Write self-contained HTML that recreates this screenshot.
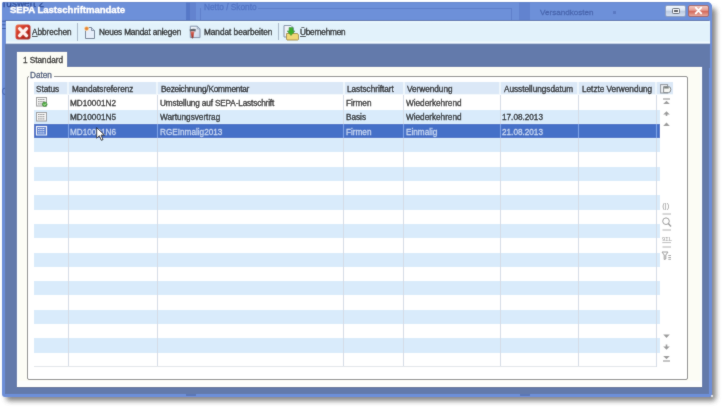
<!DOCTYPE html>
<html><head><meta charset="utf-8">
<style>
*{margin:0;padding:0;box-sizing:border-box}
html,body{width:723px;height:408px;overflow:hidden;background:#ffffff;font-family:"Liberation Sans",sans-serif;position:relative}
.a{position:absolute}
.t{position:absolute;white-space:nowrap;font-size:8.2px;color:#141414;line-height:10px;-webkit-text-stroke:0.26px currentColor;will-change:transform}
svg{position:absolute}
</style></head><body><svg width="0" height="0" style="position:absolute"><filter id="sb" x="0" y="0" width="1" height="1"><feConvolveMatrix order="3" kernelMatrix="0.0225 0.0675 0.0225 0.0675 0.6400 0.0675 0.0225 0.0675 0.0225" edgeMode="duplicate"/></filter></svg><div style="position:absolute;left:0;top:0;width:723px;height:408px;overflow:hidden;filter:url(#sb)">

<div class="a" style="left:6px;top:8px;width:710px;height:393px;background:#707070;filter:blur(2.5px);opacity:.85;border-radius:4px"></div>
<div class="a" style="left:2px;top:2px;width:710px;height:395px;background:#6d8fd8;border-radius:2px 5px 3px 3px"></div>
<div class="a" style="left:2px;top:2px;width:710px;height:18.5px;background:#6d90d9;border-radius:2px 5px 0 0;overflow:hidden"></div>
<div class="a" style="left:186px;top:2px;width:4px;height:18px;background:#5778c8"></div>
<div class="a" style="left:190px;top:2px;width:6px;height:18px;background:#6383cf"></div>
<div class="a" style="left:519px;top:2px;width:10.5px;height:18px;background:#5f80cc;opacity:.8"></div>
<div class="a" style="left:200px;top:7.5px;width:1px;height:13px;background:#5674c0;opacity:.6"></div>
<div class="a" style="left:258px;top:7.5px;width:253px;height:1px;background:#5674c0;opacity:.6"></div>
<div class="a" style="left:511px;top:7.5px;width:1px;height:13px;background:#5674c0;opacity:.6"></div>
<div class="a" style="left:2px;top:2px;width:150px;height:18px;overflow:hidden"><div class="t" style="left:1px;top:-3.4px;font-size:10px;color:#23418f;opacity:.9">ruswert 2</div></div>
<div class="t" style="left:204px;top:2.3px;font-size:8.3px;color:#5070c0;opacity:.9">Netto / Skonto</div>
<div class="t" style="left:539.5px;top:8.3px;font-size:8.1px;color:#4560a8;opacity:.9">Versandkosten</div>
<div class="a" style="left:612.8px;top:10.6px;width:3px;height:3.5px;background:#5a78c2"></div>
<div class="a" style="left:4px;top:2px;width:704px;height:1px;background:#6585c8;opacity:.7"></div>
<svg style="left:1px;top:20px" width="6" height="10" viewBox="0 0 6 10"><path d="M1 1.2 H5 M1 4.8 H4.5 M1 8.5 H5" stroke="#2f4f9a" stroke-width="1" opacity=".75"/></svg>
<svg style="left:1px;top:87px" width="6" height="9" viewBox="0 0 6 9"><path d="M5 1.5 Q1.5 0.5 1.5 4.3 Q1.5 8 5 7.2" fill="none" stroke="#3a5aa8" stroke-width="1.1" opacity=".7"/></svg>
<div class="a" style="left:5px;top:19.8px;width:704px;height:1px;background:#5270ae"></div>
<div class="t" style="left:10px;top:4.4px;font-size:9.6px;font-weight:bold;color:#fff;letter-spacing:-0.05px;line-height:12px;-webkit-text-stroke:0.35px #fff">SEPA Lastschriftmandate</div>
<div class="a" style="left:665px;top:5px;width:21px;height:11.6px;background:linear-gradient(#f2f7fe 0%,#dce7f6 40%,#bccbe2 55%,#d4e0f2 100%);border:1px solid #8e9fc0;border-radius:2px"></div>
<div class="a" style="left:671.5px;top:8.2px;width:8.5px;height:6px;border:1.3px solid #505866;border-radius:1.5px;background:#f4f6fa"></div>
<div class="a" style="left:673.8px;top:10.2px;width:4px;height:2px;background:#404650"></div>
<div class="a" style="left:688px;top:5px;width:20.5px;height:11.6px;background:linear-gradient(#f2c6be 0%,#e6a096 40%,#d46a5c 55%,#e4a89c 100%);border:1px solid #a06868;border-radius:2px"></div>
<svg style="left:693px;top:6.3px" width="11" height="9" viewBox="0 0 11 9"><path d="M2.8 1.6 L8.2 7.4 M8.2 1.6 L2.8 7.4" stroke="#fff" stroke-width="1.8" stroke-linecap="round"/></svg>
<div class="a" style="left:6px;top:20.5px;width:703.5px;height:23.5px;background:linear-gradient(#eaf8fd 0px,#e2f2fb 3px,#e2f2fb 20px,#f4fcff 21.5px,#8aa0c8 23.5px)"></div>
<div class="a" style="left:4.5px;top:44px;width:705px;height:23.5px;background:#637aab"></div>
<div class="a" style="left:4.5px;top:44px;width:12.5px;height:343.5px;background:#637aab"></div>
<div class="a" style="left:16.5px;top:52px;width:1px;height:335px;background:#5a6e9a"></div>
<div class="a" style="left:701.5px;top:44px;width:7.5px;height:343.5px;background:#637aab"></div>
<div class="a" style="left:4.5px;top:386.5px;width:704.5px;height:7.3px;background:#637aab"></div>
<div class="a" style="left:17px;top:386.5px;width:685px;height:1px;background:#5a6e9a"></div>
<div class="a" style="left:186px;top:393.8px;width:10px;height:2.5px;background:#5a78b8"></div>
<div class="a" style="left:520px;top:393.8px;width:10px;height:2.5px;background:#5a78b8"></div>
<div class="a" style="left:710.5px;top:395px;width:2px;height:2px;background:#f0f4ff;border-radius:1px"></div>
<svg style="left:14.5px;top:23.5px" width="16" height="16" viewBox="0 0 16 16"><defs><linearGradient id="rx" x1="0" y1="0" x2="1" y2="1"><stop offset="0" stop-color="#ea6a40"/><stop offset=".45" stop-color="#cf3020"/><stop offset="1" stop-color="#9e1a0c"/></linearGradient></defs><rect x="0.5" y="0.5" width="15" height="15" rx="2.5" fill="url(#rx)"/><path d="M4.6 4.6 L11.5 11.6 M11.5 4.6 L4.6 11.6" stroke="#fff2ee" stroke-width="3.1" stroke-linecap="round"/></svg>
<div class="t" style="left:32.1px;top:28.1px;color:#111"><u style="text-decoration-thickness:1px;text-underline-offset:1px">A</u>bbrechen</div>
<div class="a" style="left:77px;top:22.5px;width:1px;height:18px;background:#a8b8c8"></div>
<svg style="left:84px;top:25px" width="12" height="15" viewBox="0 0 12 15"><path d="M1.5 2.5 H7.5 L10.5 5.5 V13.5 H1.5 Z" fill="#e6eefa" stroke="#6a7a90" stroke-width="1"/><path d="M7.5 2.5 V5.5 H10.5" fill="#c8d4e4" stroke="#6a7a90" stroke-width=".8"/><circle cx="2.6" cy="3.6" r="2.2" fill="#e8862a" stroke="#fff0c0" stroke-width=".6"/></svg>
<div class="t" style="left:98.9px;top:28.1px;color:#111;letter-spacing:-0.13px">Neues Mandat anlegen</div>
<svg style="left:189px;top:24.5px" width="13" height="15" viewBox="0 0 13 15"><defs><linearGradient id="dg" x1="0" y1="0" x2="1" y2="1"><stop offset="0" stop-color="#f6f9fd"/><stop offset="1" stop-color="#c8d6ea"/></linearGradient><linearGradient id="bg2" x1="0" y1="0" x2="0" y2="1"><stop offset="0" stop-color="#e07060"/><stop offset=".6" stop-color="#b84030"/><stop offset="1" stop-color="#701810"/></linearGradient></defs><path d="M1.3 1.2 H8.3 L11 3.9 V12.6 H1.3 Z" fill="url(#dg)" stroke="#8090a8" stroke-width="1" stroke-linejoin="round"/><path d="M8.3 1.2 V3.9 H11" fill="none" stroke="#8090a8" stroke-width=".7"/><path d="M0.6 4.6 Q3 3.4 6.8 4 L6.6 6.4 Q3.5 5.8 1 6.6 Z" fill="#5a6068"/><path d="M1.4 6.4 H5.4 L4.4 12.8 Q3.4 14 2.6 12.8 Z" fill="url(#bg2)"/></svg>
<div class="t" style="left:204.2px;top:28.1px;color:#111">Mandat bearbeiten</div>
<div class="a" style="left:278px;top:22.5px;width:1px;height:17px;background:#a8b8c8"></div>
<svg style="left:282.5px;top:24.5px" width="17" height="16" viewBox="0 0 17 16"><path d="M1 0.5 H8 L10.5 3 V12 H1 Z" fill="#eef2f8" stroke="#8090a8" stroke-width="1"/><path d="M3.5 8.5 H14.5 L15.5 10 V14.5 L14.5 15 H4 L3.5 14 Z" fill="#f0d878" stroke="#a08838" stroke-width=".9"/><path d="M6 2.5 H10 V6 H12 L8 10.5 L4 6 H6 Z" fill="#3cae2c" stroke="#2a8a20" stroke-width=".5"/></svg>
<div class="t" style="left:300.1px;top:28.1px;color:#111;letter-spacing:-0.2px"><u style="text-decoration-thickness:1px;text-underline-offset:1px">Ü</u>bernehmen</div>
<div class="a" style="left:17px;top:67px;width:685px;height:319.5px;background:#fcfcf5"></div>
<div class="a" style="left:16.8px;top:52px;width:50.3px;height:15.5px;background:#fcfcf5"></div>
<div class="a" style="left:16.8px;top:52px;width:1.5px;height:334px;background:#f6fbff"></div>
<div class="a" style="left:700px;top:67px;width:2px;height:319.5px;background:#f8fcff"></div>
<div class="a" style="left:17px;top:380.5px;width:685px;height:6px;background:#fcfdfc"></div>
<div class="t" style="left:23px;top:55.9px;">1 Standard</div>
<div class="a" style="left:27px;top:76px;width:661px;height:303.5px;border:1px solid #858585;background:#fff;border-radius:2px"></div>
<div class="a" style="left:29px;top:72px;width:25px;height:5px;background:#fcfcf5"></div>
<div class="a" style="left:29px;top:77px;width:25px;height:3px;background:#fff"></div>
<div class="t" style="left:30px;top:71.2px;color:#3c4e74">Daten</div>
<div class="a" style="left:34px;top:82px;width:639px;height:12.200000000000003px;background:#dbe8f7"></div>
<div class="a" style="left:67px;top:82px;width:2.2px;height:12.200000000000003px;background:#eef5fc"></div>
<div class="a" style="left:156.3px;top:82px;width:2.2px;height:12.200000000000003px;background:#eef5fc"></div>
<div class="a" style="left:342.5px;top:82px;width:2.2px;height:12.200000000000003px;background:#eef5fc"></div>
<div class="a" style="left:402.5px;top:82px;width:2.2px;height:12.200000000000003px;background:#eef5fc"></div>
<div class="a" style="left:499px;top:82px;width:2.2px;height:12.200000000000003px;background:#eef5fc"></div>
<div class="a" style="left:577px;top:82px;width:2.2px;height:12.200000000000003px;background:#eef5fc"></div>
<div class="a" style="left:655px;top:82px;width:2.2px;height:12.200000000000003px;background:#eef5fc"></div>
<div class="a" style="left:34px;top:94.0px;width:639px;height:1.2px;background:#f4f9fd"></div>
<div class="t" style="left:35.9px;top:84.6px;">Status</div>
<div class="t" style="left:71.6px;top:84.6px;">Mandatsreferenz</div>
<div class="t" style="left:160.9px;top:84.6px;letter-spacing:-0.18px">Bezeichnung/Kommentar</div>
<div class="t" style="left:347.1px;top:84.6px;">Lastschriftart</div>
<div class="t" style="left:407.1px;top:84.6px;">Verwendung</div>
<div class="t" style="left:503.6px;top:84.6px;">Ausstellungsdatum</div>
<div class="t" style="left:581.6px;top:84.6px;">Letzte Verwendung</div>
<svg style="left:660px;top:84px" width="12" height="10" viewBox="0 0 12 10"><rect x="0.6" y="0.6" width="7" height="8.4" fill="#eef1f4" stroke="#8c9298" stroke-width="1"/><path d="M3.6 2.6 H8.6 Q10.8 2.6 10.8 5.4 Q10.8 8.6 8.6 8.6 H3.6 Z" fill="#f4f5f2" stroke="#7e8488" stroke-width="1"/><rect x="4.2" y="3.1" width="4.5" height="1.4" fill="#6c7470"/></svg>
<div class="a" style="left:34px;top:109.5px;width:626px;height:14.3px;background:#d9ebfb"></div>
<div class="a" style="left:34px;top:123.80000000000001px;width:626px;height:14.3px;background:#4470c8"></div>
<div class="a" style="left:34px;top:138.10000000000002px;width:626px;height:14.3px;background:#d9ebfb"></div>
<div class="a" style="left:34px;top:166.7px;width:626px;height:14.3px;background:#d9ebfb"></div>
<div class="a" style="left:34px;top:195.3px;width:626px;height:14.3px;background:#d9ebfb"></div>
<div class="a" style="left:34px;top:223.90000000000003px;width:626px;height:14.3px;background:#d9ebfb"></div>
<div class="a" style="left:34px;top:252.5px;width:626px;height:14.3px;background:#d9ebfb"></div>
<div class="a" style="left:34px;top:281.1px;width:626px;height:14.3px;background:#d9ebfb"></div>
<div class="a" style="left:34px;top:309.7px;width:626px;height:14.3px;background:#d9ebfb"></div>
<div class="a" style="left:34px;top:338.3px;width:626px;height:14.3px;background:#d9ebfb"></div>
<div class="a" style="left:67.5px;top:95.2px;width:1px;height:271.7px;background:#d5dce6"></div>
<div class="a" style="left:67.5px;top:123.80000000000001px;width:1px;height:14.3px;background:#7aa0e6"></div>
<div class="a" style="left:156.8px;top:95.2px;width:1px;height:271.7px;background:#d5dce6"></div>
<div class="a" style="left:156.8px;top:123.80000000000001px;width:1px;height:14.3px;background:#7aa0e6"></div>
<div class="a" style="left:343.0px;top:95.2px;width:1px;height:271.7px;background:#d5dce6"></div>
<div class="a" style="left:343.0px;top:123.80000000000001px;width:1px;height:14.3px;background:#7aa0e6"></div>
<div class="a" style="left:403.0px;top:95.2px;width:1px;height:271.7px;background:#d5dce6"></div>
<div class="a" style="left:403.0px;top:123.80000000000001px;width:1px;height:14.3px;background:#7aa0e6"></div>
<div class="a" style="left:499.5px;top:95.2px;width:1px;height:271.7px;background:#d5dce6"></div>
<div class="a" style="left:499.5px;top:123.80000000000001px;width:1px;height:14.3px;background:#7aa0e6"></div>
<div class="a" style="left:577.5px;top:95.2px;width:1px;height:271.7px;background:#d5dce6"></div>
<div class="a" style="left:577.5px;top:123.80000000000001px;width:1px;height:14.3px;background:#7aa0e6"></div>
<div class="a" style="left:655.5px;top:95.2px;width:1px;height:271.7px;background:#d5dce6"></div>
<div class="a" style="left:655.5px;top:123.80000000000001px;width:1px;height:14.3px;background:#7aa0e6"></div>
<div class="a" style="left:34px;top:366.4px;width:622px;height:1px;background:#e2e6ea"></div>
<div class="t" style="left:70.4px;top:98.9px;">MD10001N2</div>
<div class="t" style="left:159.70000000000002px;top:98.9px;;letter-spacing:-0.13px">Umstellung auf SEPA-Lastschrift</div>
<div class="t" style="left:345.9px;top:98.9px;">Firmen</div>
<div class="t" style="left:405.9px;top:98.9px;">Wiederkehrend</div>
<div class="t" style="left:70.4px;top:113.2px;">MD10001N5</div>
<div class="t" style="left:159.70000000000002px;top:113.2px;">Wartungsvertrag</div>
<div class="t" style="left:345.9px;top:113.2px;">Basis</div>
<div class="t" style="left:405.9px;top:113.2px;">Wiederkehrend</div>
<div class="t" style="left:502.4px;top:113.2px;">17.08.2013</div>
<div class="t" style="left:70.4px;top:127.50000000000001px;color:#c6d5f0">MD10001N6</div>
<div class="t" style="left:159.70000000000002px;top:127.50000000000001px;color:#c6d5f0">RGEInmalig2013</div>
<div class="t" style="left:345.9px;top:127.50000000000001px;color:#c6d5f0">Firmen</div>
<div class="t" style="left:405.9px;top:127.50000000000001px;color:#c6d5f0">Einmalig</div>
<div class="t" style="left:502.4px;top:127.50000000000001px;color:#c6d5f0">21.08.2013</div>
<svg style="left:36px;top:97.2px" width="12" height="10" viewBox="0 0 12 10"><rect x="0.5" y="0.5" width="10" height="8.5" fill="#f8f8f8" stroke="#9a9a9a" stroke-width="1"/><path d="M2 2.5 H9 M2 4.7 H9 M2 6.9 H9" stroke="#7a7a7a" stroke-width="0.9" stroke-dasharray="1.6 0.6"/><circle cx="8.7" cy="7.3" r="2.4" fill="#44a838" stroke="#2a7020" stroke-width=".5"/><path d="M7.5 7.3 L8.5 8.2 L10 6.5" stroke="#e0f8d0" stroke-width=".9" fill="none"/></svg>
<svg style="left:36px;top:111.5px" width="12" height="10" viewBox="0 0 12 10"><rect x="0.5" y="0.5" width="10" height="8.5" fill="#f8f8f8" stroke="#9a9a9a" stroke-width="1"/><path d="M2 2.5 H9 M2 4.7 H9 M2 6.9 H9" stroke="#7a7a7a" stroke-width="0.9" stroke-dasharray="1.6 0.6"/></svg>
<svg style="left:36px;top:125.6px" width="12" height="10" viewBox="0 0 12 10"><rect x="0.5" y="0.5" width="10" height="8.5" fill="#5a80d0" stroke="#e8eef8" stroke-width="1"/><path d="M2 2.5 H9 M2 4.7 H9 M2 6.9 H9" stroke="#f0f4fc" stroke-width="0.9" stroke-dasharray="1.6 0.6"/></svg>
<svg style="left:660px;top:96px" width="14" height="34" viewBox="0 0 14 34"><path d="M3 3 H10" stroke="#9a9a9a" stroke-width="1.2"/><path d="M3.2 8 L6.5 4.8 L9.8 8 Z" fill="#9a9a9a"/><path d="M3.2 18.5 L6.5 15.2 L9.8 18.5 Z" fill="#9a9a9a"/><path d="M6.5 18 V20" stroke="#9a9a9a" stroke-width="1.6"/><path d="M3.2 30 L6.5 26.5 L9.8 30 Z" fill="#9a9a9a"/></svg>
<svg style="left:660px;top:332px" width="14" height="32" viewBox="0 0 14 32"><path d="M3.2 2.5 L6.5 6 L9.8 2.5 Z" fill="#9a9a9a"/><path d="M3.2 14.5 L6.5 17.8 L9.8 14.5 Z" fill="#9a9a9a"/><path d="M6.5 12.5 V15" stroke="#9a9a9a" stroke-width="1.6"/><path d="M3.2 24 L6.5 27.3 L9.8 24 Z" fill="#9a9a9a"/><path d="M3 29 H10" stroke="#9a9a9a" stroke-width="1.2"/></svg>
<svg style="left:660px;top:200px" width="14" height="62" viewBox="0 0 14 62"><text x="2.3" y="7.6" font-family="Liberation Sans" font-size="7.5" fill="#8a8a8a" style="will-change:transform">(|)</text><path d="M2.5 14 H11" stroke="#b0b0b0" stroke-width="1"/><circle cx="6" cy="21.2" r="3.3" fill="none" stroke="#9a9a9a" stroke-width="1"/><path d="M8.3 23.5 L11 26.5" stroke="#9a9a9a" stroke-width="1.5"/><path d="M2.5 30 H11" stroke="#b0b0b0" stroke-width="1"/><text x="2" y="41.2" font-family="Liberation Sans" font-size="5.8" fill="#9a9a9a">9ΣL</text><path d="M2.3 42.6 H11" stroke="#a8a8a8" stroke-width=".8"/><path d="M2.5 47 H11" stroke="#b0b0b0" stroke-width="1"/><path d="M2 52 H8 L5.8 55 V59 L4.2 59.5 V55 Z" fill="none" stroke="#9a9a9a" stroke-width="1"/><path d="M8.3 55.5 H11 M8.3 57.5 H11 M8.3 59.3 H11" stroke="#9a9a9a" stroke-width=".9"/></svg>
<svg style="left:95.5px;top:127px" width="10" height="16" viewBox="0 0 10 16"><path d="M0.7 0.7 V11.2 L3.3 8.7 L5.3 13.3 L7 12.6 L5.1 8.1 H8.5 Z" fill="#fff" stroke="#000" stroke-width="0.8" stroke-linejoin="round"/></svg>
</div></body></html>
